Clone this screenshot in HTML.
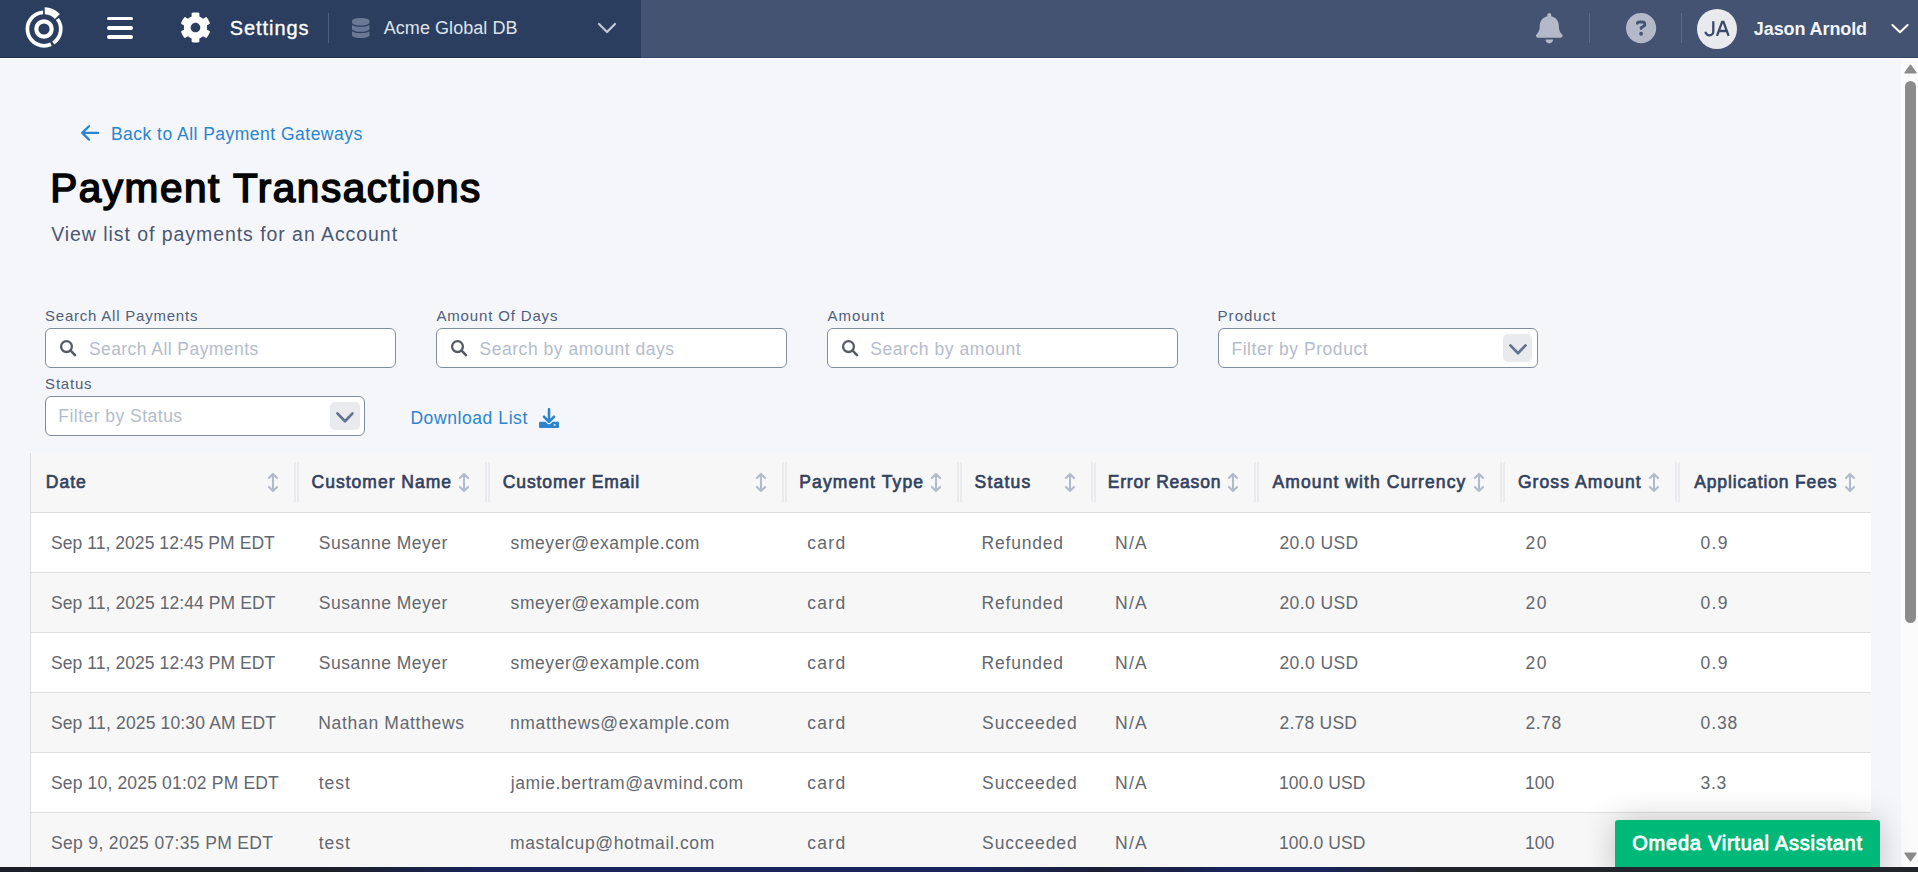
<!DOCTYPE html>
<html lang="en"><head><meta charset="utf-8"><title>Payment Transactions</title>
<style>
*{box-sizing:border-box}
html,body{margin:0;padding:0}
body{width:1918px;height:872px;overflow:hidden;position:relative;background:#f5f6fa;font-family:"Liberation Sans",sans-serif;}
.t{position:absolute;white-space:pre;line-height:1;}
.abs{position:absolute}
svg{position:absolute;overflow:visible}
.inp{position:absolute;height:40px;background:#fff;border:1px solid #808ca1;border-radius:6px}
.chev{position:absolute;width:29px;height:28px;border-radius:5px;background:#e9eaed}
.sep{position:absolute;top:462px;width:5px;height:40px;border-left:2px solid #e9eaed;border-right:2px solid #e9eaed}
.row{position:absolute;left:31px;width:1840px;height:60px;border-bottom:1px solid #dfdfe2}
.vdiv{position:absolute;top:13px;width:1px;height:30px}
</style></head><body>
<header>
<div class="abs" style="left:0;top:0;width:641px;height:58px;background:#2b3e5f;border-bottom:1px solid #1f3253"></div>
<div class="abs" style="left:641px;top:0;width:1277px;height:58px;background:#445371;border-bottom:1px solid #35476a"></div>
<div class="abs" style="left:0;top:58px;width:1918px;height:1px;background:#fdfdfe"></div>
<svg style="left:20.900px;top:4.400px" width="46" height="50" viewBox="-23 -25 46 50">
<circle r="7.7" fill="none" stroke="#fff" stroke-width="4.2"/>
<path d="M -0.9 -16.68 A 16.7 16.7 0 1 0 7.0 15.2" fill="none" stroke="#fff" stroke-width="3.7"/>
<path d="M 9.3 14.0 A 16.7 16.7 0 0 0 13.4 -10.0" fill="none" stroke="#fff" stroke-width="3.7"/>
<path d="M 0.6 -21.8 A 21.8 21.8 0 0 1 15.9 -14.9 L 10.9 -10.1 A 14.8 14.8 0 0 0 0.9 -14.8 Z" fill="#fff"/>
</svg>
<div class="abs" style="left:107px;top:16.6px;width:26px;height:3.9px;border-radius:2px;background:#fff"></div>
<div class="abs" style="left:107px;top:26.1px;width:26px;height:3.9px;border-radius:2px;background:#fff"></div>
<div class="abs" style="left:107px;top:35.4px;width:26px;height:3.9px;border-radius:2px;background:#fff"></div>
<svg style="left:179.800px;top:12.300px" width="31" height="31" viewBox="0 0 512 512"><path fill="#fff" d="M487.4 315.7l-42.6-24.6c4.3-23.2 4.3-47 0-70.200l42.6-24.600c4.900-2.800 7.100-8.600 5.500-14-11.100-35.600-30-67.800-54.700-94.600-3.800-4.100-10-5.100-14.800-2.300L380.800 110c-17.900-15.400-38.500-27.300-60.800-35.100V25.800c0-5.600-3.900-10.500-9.400-11.700-36.700-8.200-74.300-7.800-109.200 0-5.500 1.200-9.400 6.100-9.400 11.700V75c-22.200 7.900-42.800 19.800-60.800 35.100L88.700 85.500c-4.900-2.800-11-1.900-14.800 2.300-24.700 26.700-43.600 58.900-54.700 94.600-1.700 5.400.6 11.200 5.500 14L67.300 221c-4.300 23.200-4.300 47 0 70.200l-42.600 24.600c-4.900 2.800-7.100 8.600-5.500 14 11.100 35.600 30 67.800 54.700 94.600 3.800 4.100 10 5.100 14.800 2.300l42.600-24.600c17.900 15.400 38.500 27.300 60.800 35.100v49.200c0 5.600 3.900 10.500 9.400 11.700 36.700 8.200 74.300 7.800 109.200 0 5.500-1.200 9.400-6.100 9.400-11.700v-49.200c22.200-7.900 42.800-19.800 60.800-35.100l42.600 24.600c4.900 2.800 11 1.900 14.800-2.300 24.700-26.700 43.600-58.900 54.700-94.600 1.500-5.500-.7-11.300-5.600-14.100zM256 336c-44.100 0-80-35.900-80-80s35.900-80 80-80 80 35.900 80 80-35.900 80-80 80z"/></svg>
<span class="t" style="left:229.8px;top:18px;font-size:20px;color:#fff;letter-spacing:0.929px;-webkit-text-stroke:0.35px #fff;">Settings</span>
<div class="vdiv" style="left:328px;background:#506080"></div>
<svg style="left:352px;top:18px" width="17.5" height="20" viewBox="0 0 448 512"><path fill="#6a7993" d="M448 73.143v45.714C448 159.143 347.667 192 224 192S0 159.143 0 118.857V73.143C0 32.857 100.333 0 224 0s224 32.857 224 73.143zM448 176v102.857C448 319.143 347.667 352 224 352S0 319.143 0 278.857V176c48.125 33.143 136.208 48.572 224 48.572S399.874 209.143 448 176zm0 160v102.857C448 479.143 347.667 512 224 512S0 479.143 0 438.857V336c48.125 33.143 136.208 48.572 224 48.572S399.874 369.143 448 336z"/></svg>
<span class="t" style="left:383.71px;top:19px;font-size:18px;color:#dfe3ea;letter-spacing:0.059px;">Acme Global DB</span>
<svg style="left:597px;top:22px" width="20" height="13" viewBox="0 0 20 13"><path d="M2 2 L10 10 L18 2" fill="none" stroke="#c3c9d5" stroke-width="2.2" stroke-linecap="round" stroke-linejoin="round"/></svg>
<svg style="left:1535.7px;top:12.5px" width="26.6" height="30.4" viewBox="0 0 448 512"><path fill="#b3b9c8" d="M224 512c35.320 0 63.970-28.650 63.970-64H160.030c0 35.350 28.650 64 63.970 64zm215.390-149.710c-19.320-20.760-55.470-51.990-55.470-154.290 0-77.700-54.480-139.900-127.940-155.160V32c0-17.670-14.320-32-31.980-32s-31.980 14.330-31.980 32v20.840C118.560 68.100 64.080 130.300 64.080 208c0 102.300-36.150 133.530-55.470 154.290-6 6.450-8.660 14.160-8.610 21.710.11 16.400 12.980 32 32.100 32h383.800c19.120 0 32-15.600 32.100-32 .05-7.550-2.610-15.270-8.610-21.710z"/></svg>
<div class="vdiv" style="left:1589px;background:#5e6b86"></div>
<svg style="left:1625.9px;top:12.900px" width="30.2" height="30.2" viewBox="0 0 512 512"><path fill="#b3b9c8" fill-rule="evenodd" d="M256 512A256 256 0 1 0 256 0a256 256 0 1 0 0 512zM169.800 165.300c7.900-22.300 29.100-37.300 52.800-37.300h58.300c34.900 0 63.100 28.300 63.100 63.100c0 22.600-12.100 43.500-31.700 54.800L280 264.400c-.2 13-10.900 23.600-24 23.600c-13.300 0-24-10.700-24-24V250.500c0-8.600 4.600-16.500 12.100-20.800l44.300-25.400c4.700-2.700 7.600-7.700 7.600-13.100c0-8.400-6.800-15.100-15.100-15.100H222.600c-3.400 0-6.400 2.100-7.500 5.300l-.4 1.200c-4.400 12.500-18.200 19-30.600 14.600s-19-18.200-14.600-30.600l.4-1.200zM224 352a32 32 0 1 1 64 0 32 32 0 1 1 -64 0z"/></svg>
<div class="vdiv" style="left:1681px;background:#5e6b86"></div>
<div class="abs" style="left:1697px;top:9px;width:40px;height:40px;border-radius:50%;background:#e9eaed"></div>
<svg style="left:1697px;top:9px" width="40" height="40" viewBox="1697 9 40 40" aria-label="JA"><title>JA</title><g fill="none" stroke="#3a4a6b" stroke-width="2.300"><path d="M1713.300 21.300 V31.200 A3.700 3.700 0 0 1 1705.500 31.700"/><path d="M1717 35.900 L1722.100 21.900 H1723.500 L1728.600 35.900 M1718.900 31 H1726.700" stroke-linejoin="miter"/></g></svg>
<span class="t" style="left:1753.83px;top:20px;font-size:18px;color:#f1f4f9;font-weight:700;letter-spacing:-0.096px;">Jason Arnold</span>
<svg style="left:1890px;top:23px" width="20" height="12" viewBox="0 0 20 12"><path d="M2.4 2 L10 9.2 L17.6 2" fill="none" stroke="#fff" stroke-width="2" stroke-linecap="round" stroke-linejoin="round"/></svg>
</header>
<main>
<svg style="left:80px;top:124px" width="20" height="18" viewBox="0 0 20 18"><path d="M18.2 8.9 H2.4 M9 2.2 L2.2 8.9 L9 15.6" fill="none" stroke="#2a84cf" stroke-width="2.300" stroke-linecap="round" stroke-linejoin="round"/></svg>
<span class="t" style="left:110.9px;top:126px;font-size:17.5px;color:#2a84cf;letter-spacing:0.48px;">Back to All Payment Gateways</span>
<span class="t" style="left:50.16px;top:168px;font-size:40.5px;color:#050505;letter-spacing:1.553px;-webkit-text-stroke:1.600px #050505;">Payment Transactions</span>
<span class="t" style="left:51.2px;top:225px;font-size:19.5px;color:#4a5873;letter-spacing:0.943px;">View list of payments for an Account</span>
<span class="t" style="left:45.03px;top:308px;font-size:15px;color:#505e7b;letter-spacing:0.779px;">Search All Payments</span>
<div class="inp" style="left:45px;top:328px;width:351px"></div>
<svg style="left:59px;top:339px" width="18" height="18" viewBox="0 0 18 18"><circle cx="7.5" cy="7.600" r="5.4" fill="none" stroke="#555a63" stroke-width="2.300"/><path d="M11.600 11.7 L16 16.100" stroke="#555a63" stroke-width="2.600" stroke-linecap="round"/></svg>
<span class="t" style="left:88.91px;top:341px;font-size:17.5px;color:#b4bccc;letter-spacing:0.437px;">Search All Payments</span>
<span class="t" style="left:436.42px;top:308px;font-size:15px;color:#505e7b;letter-spacing:0.844px;">Amount Of Days</span>
<div class="inp" style="left:436px;top:328px;width:351px"></div>
<svg style="left:450px;top:339px" width="18" height="18" viewBox="0 0 18 18"><circle cx="7.5" cy="7.600" r="5.4" fill="none" stroke="#555a63" stroke-width="2.300"/><path d="M11.600 11.7 L16 16.100" stroke="#555a63" stroke-width="2.600" stroke-linecap="round"/></svg>
<span class="t" style="left:479.51px;top:341px;font-size:17.5px;color:#b4bccc;letter-spacing:0.533px;">Search by amount days</span>
<span class="t" style="left:827.62px;top:308px;font-size:15px;color:#505e7b;letter-spacing:0.955px;">Amount</span>
<div class="inp" style="left:827px;top:328px;width:351px"></div>
<svg style="left:841px;top:339px" width="18" height="18" viewBox="0 0 18 18"><circle cx="7.5" cy="7.600" r="5.4" fill="none" stroke="#555a63" stroke-width="2.300"/><path d="M11.600 11.7 L16 16.100" stroke="#555a63" stroke-width="2.600" stroke-linecap="round"/></svg>
<span class="t" style="left:870.31px;top:341px;font-size:17.5px;color:#b4bccc;letter-spacing:0.558px;">Search by amount</span>
<span class="t" style="left:1217.6px;top:308px;font-size:15px;color:#505e7b;letter-spacing:1.017px;">Product</span>
<div class="inp" style="left:1218px;top:328px;width:320px"></div>
<span class="t" style="left:1231.4px;top:341px;font-size:17.5px;color:#b4bccc;letter-spacing:0.549px;">Filter by Product</span>
<div class="chev" style="left:1503px;top:334px"></div>
<svg style="left:1508px;top:343px" width="20" height="13" viewBox="0 0 20 13"><path d="M2.400 2.400 L10 10.200 L17.500 2.400" fill="none" stroke="#63728e" stroke-width="2.700" stroke-linecap="round" stroke-linejoin="round"/></svg>
<span class="t" style="left:45.12px;top:376px;font-size:15px;color:#505e7b;letter-spacing:0.775px;">Status</span>
<div class="inp" style="left:45px;top:396px;width:320px"></div>
<span class="t" style="left:58.3px;top:408px;font-size:17.5px;color:#b4bccc;letter-spacing:0.473px;">Filter by Status</span>
<div class="chev" style="left:330px;top:402px;width:30px"></div>
<svg style="left:335.3px;top:411px" width="20" height="13" viewBox="0 0 20 13"><path d="M2.400 2.400 L10 10.200 L17.500 2.400" fill="none" stroke="#63728e" stroke-width="2.700" stroke-linecap="round" stroke-linejoin="round"/></svg>
<span class="t" style="left:410.4px;top:410px;font-size:17.5px;color:#2a84cf;letter-spacing:0.582px;">Download List</span>
<svg style="left:539px;top:408px" width="20" height="20" viewBox="0 0 512 512"><path fill="#2a84cf" d="M288 32c0-17.700-14.300-32-32-32s-32 14.300-32 32V274.700l-73.400-73.400c-12.500-12.500-32.800-12.500-45.300 0s-12.500 32.800 0 45.300l128 128c12.500 12.500 32.800 12.500 45.300 0l128-128c12.500-12.500 12.500-32.800 0-45.300s-32.800-12.500-45.300 0L288 274.700V32zM32 352c-17.700 0-32 14.300-32 32v96c0 17.700 14.300 32 32 32H480c17.700 0 32-14.300 32-32V384c0-17.700-14.300-32-32-32H346.500l-45.300 45.300c-25 25-65.500 25-90.500 0L165.500 352H32zm368 56a24 24 0 1 1 0 48 24 24 0 1 1 0-48z"/></svg>
</main>
<section>
<div class="abs" style="left:30px;top:453px;width:1px;height:420px;background:#dcdde1"></div>
<div class="abs" style="left:31px;top:453px;width:1840px;height:60px;background:#f7f7f8;border-bottom:1px solid #dddde1"></div>
<span class="t" style="left:45.8px;top:474px;font-size:17.5px;color:#33425f;letter-spacing:1.021px;-webkit-text-stroke:0.65px #33425f;">Date</span>
<span class="t" style="left:311.53px;top:474px;font-size:17.5px;color:#33425f;letter-spacing:1.014px;-webkit-text-stroke:0.65px #33425f;">Customer Name</span>
<span class="t" style="left:502.72px;top:474px;font-size:17.5px;color:#33425f;letter-spacing:0.914px;-webkit-text-stroke:0.65px #33425f;">Customer Email</span>
<span class="t" style="left:799.3px;top:474px;font-size:17.5px;color:#33425f;letter-spacing:1.102px;-webkit-text-stroke:0.65px #33425f;">Payment Type</span>
<span class="t" style="left:974.51px;top:474px;font-size:17.5px;color:#33425f;letter-spacing:1.238px;-webkit-text-stroke:0.65px #33425f;">Status</span>
<span class="t" style="left:1107.8px;top:474px;font-size:17.5px;color:#33425f;letter-spacing:0.773px;-webkit-text-stroke:0.65px #33425f;">Error Reason</span>
<span class="t" style="left:1272.61px;top:474px;font-size:17.5px;color:#33425f;letter-spacing:1.077px;-webkit-text-stroke:0.65px #33425f;">Amount with Currency</span>
<span class="t" style="left:1517.92px;top:474px;font-size:17.5px;color:#33425f;letter-spacing:1.082px;-webkit-text-stroke:0.65px #33425f;">Gross Amount</span>
<span class="t" style="left:1694.21px;top:474px;font-size:17.5px;color:#33425f;letter-spacing:0.866px;-webkit-text-stroke:0.65px #33425f;">Application Fees</span>
<svg style="left:267px;top:472px" width="12" height="21" viewBox="0 0 12 21"><path d="M6 2 V19 M1.900 6 L6 1.900 L10.100 6 M1.900 15 L6 19.100 L10.100 15" fill="none" stroke="#b3bac9" stroke-width="2.100" stroke-linecap="round" stroke-linejoin="round"/></svg>
<svg style="left:458px;top:472px" width="12" height="21" viewBox="0 0 12 21"><path d="M6 2 V19 M1.900 6 L6 1.900 L10.100 6 M1.900 15 L6 19.100 L10.100 15" fill="none" stroke="#b3bac9" stroke-width="2.100" stroke-linecap="round" stroke-linejoin="round"/></svg>
<svg style="left:755px;top:472px" width="12" height="21" viewBox="0 0 12 21"><path d="M6 2 V19 M1.900 6 L6 1.900 L10.100 6 M1.900 15 L6 19.100 L10.100 15" fill="none" stroke="#b3bac9" stroke-width="2.100" stroke-linecap="round" stroke-linejoin="round"/></svg>
<svg style="left:930px;top:472px" width="12" height="21" viewBox="0 0 12 21"><path d="M6 2 V19 M1.900 6 L6 1.900 L10.100 6 M1.900 15 L6 19.100 L10.100 15" fill="none" stroke="#b3bac9" stroke-width="2.100" stroke-linecap="round" stroke-linejoin="round"/></svg>
<svg style="left:1064px;top:472px" width="12" height="21" viewBox="0 0 12 21"><path d="M6 2 V19 M1.900 6 L6 1.900 L10.100 6 M1.900 15 L6 19.100 L10.100 15" fill="none" stroke="#b3bac9" stroke-width="2.100" stroke-linecap="round" stroke-linejoin="round"/></svg>
<svg style="left:1227px;top:472px" width="12" height="21" viewBox="0 0 12 21"><path d="M6 2 V19 M1.900 6 L6 1.900 L10.100 6 M1.900 15 L6 19.100 L10.100 15" fill="none" stroke="#b3bac9" stroke-width="2.100" stroke-linecap="round" stroke-linejoin="round"/></svg>
<svg style="left:1473px;top:472px" width="12" height="21" viewBox="0 0 12 21"><path d="M6 2 V19 M1.900 6 L6 1.900 L10.100 6 M1.900 15 L6 19.100 L10.100 15" fill="none" stroke="#b3bac9" stroke-width="2.100" stroke-linecap="round" stroke-linejoin="round"/></svg>
<svg style="left:1648px;top:472px" width="12" height="21" viewBox="0 0 12 21"><path d="M6 2 V19 M1.900 6 L6 1.900 L10.100 6 M1.900 15 L6 19.100 L10.100 15" fill="none" stroke="#b3bac9" stroke-width="2.100" stroke-linecap="round" stroke-linejoin="round"/></svg>
<svg style="left:1844px;top:472px" width="12" height="21" viewBox="0 0 12 21"><path d="M6 2 V19 M1.900 6 L6 1.900 L10.100 6 M1.900 15 L6 19.100 L10.100 15" fill="none" stroke="#b3bac9" stroke-width="2.100" stroke-linecap="round" stroke-linejoin="round"/></svg>
<div class="sep" style="left:294px"></div>
<div class="sep" style="left:485px"></div>
<div class="sep" style="left:782px"></div>
<div class="sep" style="left:957px"></div>
<div class="sep" style="left:1091px"></div>
<div class="sep" style="left:1254px"></div>
<div class="sep" style="left:1500px"></div>
<div class="sep" style="left:1675px"></div>
<div class="row" style="top:513px;background:#fff"></div>
<span class="t" style="left:50.91px;top:535px;font-size:17.5px;color:#63676f;letter-spacing:0.059px;">Sep 11, 2025 12:45 PM EDT</span>
<span class="t" style="left:318.81px;top:535px;font-size:17.5px;color:#63676f;letter-spacing:0.504px;">Susanne Meyer</span>
<span class="t" style="left:510.58px;top:535px;font-size:17.5px;color:#63676f;letter-spacing:0.568px;">smeyer@example.com</span>
<span class="t" style="left:807.21px;top:535px;font-size:17.5px;color:#63676f;letter-spacing:1.296px;">card</span>
<span class="t" style="left:981.6px;top:535px;font-size:17.5px;color:#63676f;letter-spacing:0.796px;">Refunded</span>
<span class="t" style="left:1115.1px;top:535px;font-size:17.5px;color:#63676f;letter-spacing:1.231px;">N/A</span>
<span class="t" style="left:1279.42px;top:535px;font-size:17.5px;color:#63676f;letter-spacing:0.414px;">20.0 USD</span>
<span class="t" style="left:1525.42px;top:535px;font-size:17.5px;color:#63676f;letter-spacing:1.6px;">20</span>
<span class="t" style="left:1700.5px;top:535px;font-size:17.5px;color:#63676f;letter-spacing:1.281px;">0.9</span>
<div class="row" style="top:573px;background:#f7f7f7"></div>
<span class="t" style="left:50.91px;top:595px;font-size:17.5px;color:#63676f;letter-spacing:0.084px;">Sep 11, 2025 12:44 PM EDT</span>
<span class="t" style="left:318.81px;top:595px;font-size:17.5px;color:#63676f;letter-spacing:0.504px;">Susanne Meyer</span>
<span class="t" style="left:510.58px;top:595px;font-size:17.5px;color:#63676f;letter-spacing:0.568px;">smeyer@example.com</span>
<span class="t" style="left:807.21px;top:595px;font-size:17.5px;color:#63676f;letter-spacing:1.296px;">card</span>
<span class="t" style="left:981.6px;top:595px;font-size:17.5px;color:#63676f;letter-spacing:0.796px;">Refunded</span>
<span class="t" style="left:1115.1px;top:595px;font-size:17.5px;color:#63676f;letter-spacing:1.231px;">N/A</span>
<span class="t" style="left:1279.42px;top:595px;font-size:17.5px;color:#63676f;letter-spacing:0.414px;">20.0 USD</span>
<span class="t" style="left:1525.42px;top:595px;font-size:17.5px;color:#63676f;letter-spacing:1.6px;">20</span>
<span class="t" style="left:1700.5px;top:595px;font-size:17.5px;color:#63676f;letter-spacing:1.281px;">0.9</span>
<div class="row" style="top:633px;background:#fff"></div>
<span class="t" style="left:50.91px;top:655px;font-size:17.5px;color:#63676f;letter-spacing:0.076px;">Sep 11, 2025 12:43 PM EDT</span>
<span class="t" style="left:318.81px;top:655px;font-size:17.5px;color:#63676f;letter-spacing:0.504px;">Susanne Meyer</span>
<span class="t" style="left:510.58px;top:655px;font-size:17.5px;color:#63676f;letter-spacing:0.568px;">smeyer@example.com</span>
<span class="t" style="left:807.21px;top:655px;font-size:17.5px;color:#63676f;letter-spacing:1.296px;">card</span>
<span class="t" style="left:981.6px;top:655px;font-size:17.5px;color:#63676f;letter-spacing:0.796px;">Refunded</span>
<span class="t" style="left:1115.1px;top:655px;font-size:17.5px;color:#63676f;letter-spacing:1.231px;">N/A</span>
<span class="t" style="left:1279.42px;top:655px;font-size:17.5px;color:#63676f;letter-spacing:0.414px;">20.0 USD</span>
<span class="t" style="left:1525.42px;top:655px;font-size:17.5px;color:#63676f;letter-spacing:1.6px;">20</span>
<span class="t" style="left:1700.5px;top:655px;font-size:17.5px;color:#63676f;letter-spacing:1.281px;">0.9</span>
<div class="row" style="top:693px;background:#f7f7f7"></div>
<span class="t" style="left:50.91px;top:715px;font-size:17.5px;color:#63676f;letter-spacing:0.153px;">Sep 11, 2025 10:30 AM EDT</span>
<span class="t" style="left:318.3px;top:715px;font-size:17.5px;color:#63676f;letter-spacing:0.683px;">Nathan Matthews</span>
<span class="t" style="left:509.96px;top:715px;font-size:17.5px;color:#63676f;letter-spacing:0.643px;">nmatthews@example.com</span>
<span class="t" style="left:807.21px;top:715px;font-size:17.5px;color:#63676f;letter-spacing:1.296px;">card</span>
<span class="t" style="left:982.11px;top:715px;font-size:17.5px;color:#63676f;letter-spacing:0.867px;">Succeeded</span>
<span class="t" style="left:1115.1px;top:715px;font-size:17.5px;color:#63676f;letter-spacing:1.231px;">N/A</span>
<span class="t" style="left:1279.42px;top:715px;font-size:17.5px;color:#63676f;letter-spacing:0.243px;">2.78 USD</span>
<span class="t" style="left:1525.52px;top:715px;font-size:17.5px;color:#63676f;letter-spacing:0.579px;">2.78</span>
<span class="t" style="left:1700.5px;top:715px;font-size:17.5px;color:#63676f;letter-spacing:0.921px;">0.38</span>
<div class="row" style="top:753px;background:#fff"></div>
<span class="t" style="left:50.91px;top:775px;font-size:17.5px;color:#63676f;letter-spacing:0.171px;">Sep 10, 2025 01:02 PM EDT</span>
<span class="t" style="left:318.64px;top:775px;font-size:17.5px;color:#63676f;letter-spacing:0.992px;">test</span>
<span class="t" style="left:510.74px;top:775px;font-size:17.5px;color:#63676f;letter-spacing:0.582px;">jamie.bertram@avmind.com</span>
<span class="t" style="left:807.21px;top:775px;font-size:17.5px;color:#63676f;letter-spacing:1.296px;">card</span>
<span class="t" style="left:982.11px;top:775px;font-size:17.5px;color:#63676f;letter-spacing:0.867px;">Succeeded</span>
<span class="t" style="left:1115.1px;top:775px;font-size:17.5px;color:#63676f;letter-spacing:1.231px;">N/A</span>
<span class="t" style="left:1278.99px;top:775px;font-size:17.5px;color:#63676f;letter-spacing:0.103px;">100.0 USD</span>
<span class="t" style="left:1525.09px;top:775px;font-size:17.5px;color:#63676f;letter-spacing:-0.013px;">100</span>
<span class="t" style="left:1700.5px;top:775px;font-size:17.5px;color:#63676f;letter-spacing:0.681px;">3.3</span>
<div class="row" style="top:813px;background:#f7f7f7"></div>
<span class="t" style="left:50.91px;top:835px;font-size:17.5px;color:#63676f;letter-spacing:0.353px;">Sep 9, 2025 07:35 PM EDT</span>
<span class="t" style="left:318.64px;top:835px;font-size:17.5px;color:#63676f;letter-spacing:0.992px;">test</span>
<span class="t" style="left:509.96px;top:835px;font-size:17.5px;color:#63676f;letter-spacing:0.624px;">mastalcup@hotmail.com</span>
<span class="t" style="left:807.21px;top:835px;font-size:17.5px;color:#63676f;letter-spacing:1.296px;">card</span>
<span class="t" style="left:982.11px;top:835px;font-size:17.5px;color:#63676f;letter-spacing:0.867px;">Succeeded</span>
<span class="t" style="left:1115.1px;top:835px;font-size:17.5px;color:#63676f;letter-spacing:1.231px;">N/A</span>
<span class="t" style="left:1278.99px;top:835px;font-size:17.5px;color:#63676f;letter-spacing:0.103px;">100.0 USD</span>
<span class="t" style="left:1525.09px;top:835px;font-size:17.5px;color:#63676f;letter-spacing:-0.013px;">100</span>
<span class="t" style="left:1700.5px;top:835px;font-size:17.5px;color:#63676f;letter-spacing:1.281px;">0.9</span>
</section>
<aside>
<div class="abs" style="left:1901px;top:58px;width:17px;height:809px;background:#fbfbfc"></div>
<svg style="left:1904px;top:63.500px" width="13" height="10" viewBox="0 0 13 10"><path d="M6.5 1.200 L12 8.800 H1 Z" fill="#8b8b8b" stroke="#8b8b8b" stroke-width="1.4" stroke-linejoin="round"/></svg>
<div class="abs" style="left:1905px;top:81px;width:11px;height:542px;border-radius:5.5px;background:#8b8b8b"></div>
<svg style="left:1904px;top:852px" width="13" height="10" viewBox="0 0 13 10"><path d="M6.5 8.800 L12 1.200 H1 Z" fill="#8b8b8b" stroke="#8b8b8b" stroke-width="1.4" stroke-linejoin="round"/></svg>
<div class="abs" style="left:1615px;top:820px;width:265px;height:60px;background:#00b877;border-radius:3px 3px 0 0;box-shadow:0 0 32px rgba(0,0,0,0.21)"></div>
<span class="t" style="left:1632.3px;top:833px;font-size:20px;color:#fff;letter-spacing:0.759px;-webkit-text-stroke:0.800px #fff;">Omeda Virtual Assistant</span>
<div class="abs" style="left:0;top:867px;width:1918px;height:5px;background:linear-gradient(90deg,#1c1f27 0%,#1c1f27 17%,#18245a 25%,#18245a 51%,#1c1e36 57.500%,#18245a 64%,#18245a 69%,#22242c 74%,#22242c 100%)"></div>
</aside>
</body></html>
